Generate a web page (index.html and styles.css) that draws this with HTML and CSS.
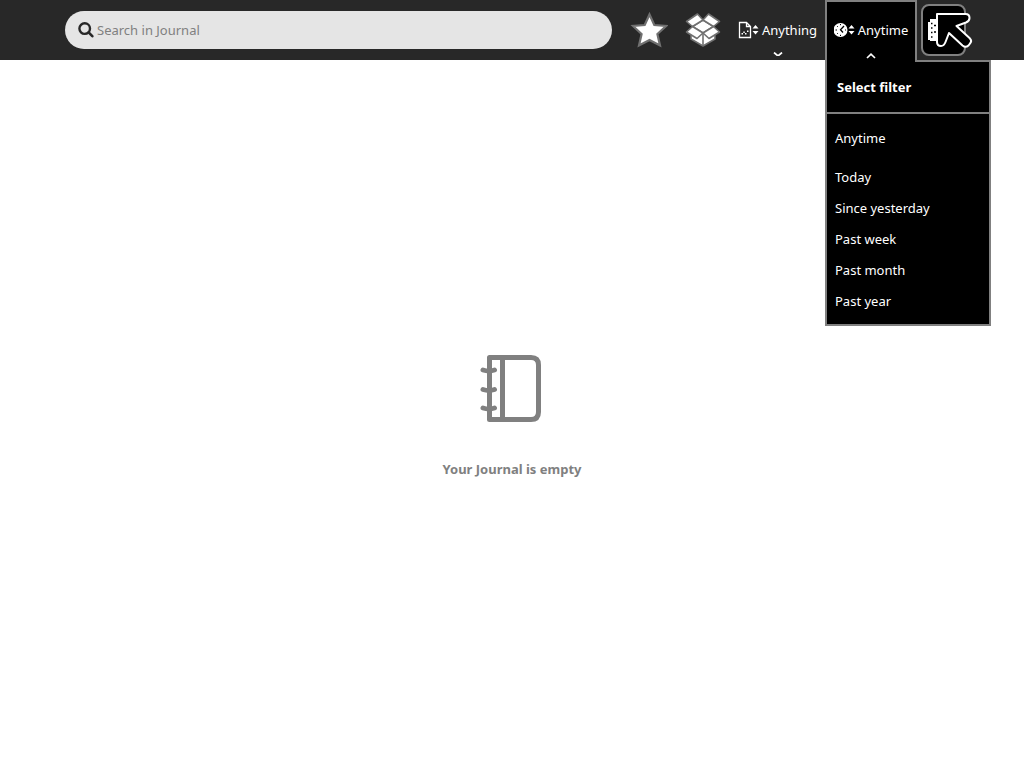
FILE: index.html
```html
<!DOCTYPE html>
<html lang="en">
<head>
<meta charset="utf-8">
<title>Journal</title>
<link rel="stylesheet" href="styles.css">
</head>
<body>
<header class="toolbar">
  <div class="search">
    <svg class="search-icon" viewBox="0 0 16 16" aria-hidden="true"><circle cx="6.7" cy="6.6" r="5.3" fill="none" stroke="#282828" stroke-width="2.4"/><path d="M10.600 10.400L14.300 14.200" stroke="#282828" stroke-width="2.600" stroke-linecap="round"/></svg>
    <input class="search-input" type="text" placeholder="Search in Journal" aria-label="Search in Journal">
  </div>
  <button class="tool" type="button" aria-label="Favorites">
    <svg class="tool-icon" viewBox="0 0 38 38" aria-hidden="true"><path d="M19.500 3.500L24.300 14L36 15L27.400 23L30 34.500L19.500 29L9 34.500L11.600 23L3 15L14.700 14Z" fill="#fff" stroke="#707070" stroke-width="2.200"/></svg>
  </button>
  <button class="tool" type="button" aria-label="Projects">
    <svg class="tool-icon" viewBox="0 0 38 38" aria-hidden="true"><g fill="#fff" stroke="#707070" stroke-width="1.600" stroke-linejoin="round"><path d="M7 20V28L19 35L31 28V20L19 14Z"/><path d="M19 23V35" fill="none"/><path d="M19 9L29.500 15.500L19 22L8.500 15.500Z"/><path d="M13.500 3L19 9L8.500 15.500L2.500 10.500Z"/><path d="M24.500 3L35.500 10.500L29.500 15.500L19 9Z"/><path d="M8.500 15.500L19 22L13 27.500L2.500 21Z"/><path d="M29.500 15.500L35.500 21L25 27.500L19 22Z"/></g></svg>
  </button>
  <button class="filter" type="button">
    <span class="filter-row">
      <svg class="filter-icon" viewBox="0 0 22 18" aria-hidden="true"><path d="M1.500 1.500H8.500L12.500 5.500V16.500H1.500ZM8.500 1.500V5.500H12.500" fill="none" stroke="#fff" stroke-width="1.300"/><path d="M3.500 12h1.500v1.500h-1.500ZM5.300 10.500h1.500v1.500h-1.500ZM7 12h1.500v1.500h-1.500ZM9 9.500h1.500v1.500h-1.500Z" fill="#fff"/><path d="M14.500 7.500L17.500 4L20.500 7.500ZM14.500 10L17.500 13.500L20.500 10Z" fill="#fff"/></svg>
      Anything
    </span>
    <svg class="chevron chevron-low" viewBox="0 0 10 4" aria-hidden="true"><path d="M1 .5L5 4L9 .5" fill="none" stroke="#fff" stroke-width="1.700"/></svg>
  </button>
  <div class="filter-group">
    <button class="filter filter-open" type="button" aria-expanded="true">
      <span class="filter-row">
        <svg class="filter-icon" viewBox="0 0 22 18" aria-hidden="true"><circle cx="6.500" cy="9" r="7" fill="#fff"/><path d="M10 5L6.500 8.800L9 11.500" fill="none" stroke="#000" stroke-width="1.300"/><path d="M1.500 9H3M6.500 3V4.200M6.500 13.800V15M3 5L3.800 5.800M3 13L3.800 12.200M11 9H12" stroke="#000"/><path d="M14.500 7.500L17.500 4L20.500 7.500ZM14.500 10L17.500 13.500L20.500 10Z" fill="#fff"/></svg>
        Anytime
      </span>
      <svg class="chevron" viewBox="0 0 10 6" aria-hidden="true"><path d="M1 5L5 1.200L9 5" fill="none" stroke="#fff" stroke-width="1.700"/></svg>
    </button>
    <section class="menu">
      <h2 class="menu-title">Select filter</h2>
      <ul class="menu-list">
        <li><button class="menu-item menu-item-first" type="button">Anytime</button></li>
        <li><button class="menu-item" type="button">Today</button></li>
        <li><button class="menu-item" type="button">Since yesterday</button></li>
        <li><button class="menu-item" type="button">Past week</button></li>
        <li><button class="menu-item" type="button">Past month</button></li>
        <li><button class="menu-item" type="button">Past year</button></li>
      </ul>
    </section>
  </div>
  <button class="sort" type="button" aria-label="Sort">
    <svg class="sort-icon" viewBox="0 0 24 24" aria-hidden="true"><path d="M0 4H2V1H16V23H2V22H0Z" fill="#fff"/><path d="M3 5.500H4.500M3 10H4.500M3 14.500H4.500M3 19H4.500M6 7.500H8M6 14H8" stroke="#000" stroke-width="1.400"/></svg>
    <svg class="pointer" viewBox="0 0 38 38" aria-hidden="true"><path d="M2 3H30.500Q34.500 3 34.500 7Q34.500 10 31 11.500L21.500 15L34.500 27Q37.500 30 35 32.500L33.500 34.500Q30.500 37 27.500 34.500L14 22L10.500 31Q9 35 6 35Q2 35 2 31Z" fill="#000" stroke="#fff" stroke-width="2" stroke-linejoin="round"/></svg>
  </button>
</header>
<main class="empty">
  <svg class="journal-icon" viewBox="0 0 64 70" aria-hidden="true"><g fill="none" stroke="#808080" stroke-width="5"><path d="M9.500 4.500H51Q58.500 4.500 58.500 12V59Q58.500 66.500 51 66.500H9.500Z" stroke-linejoin="round"/><path d="M22.500 4V67"/><path d="M3 17Q9 19 14.500 17M3 36.500Q9 38.500 14.500 36.500M3 55Q9 57 14.500 55" stroke-linecap="round"/></g></svg>
  <p class="empty-text">Your Journal is empty</p>
</main>
</body>
</html>
```
FILE: styles.css
```css
* { box-sizing: border-box; }
body {
  margin: 0;
  min-height: 100vh;
  display: flex;
  flex-direction: column;
  background: #fff;
  font: 13px/20px "Noto Sans", sans-serif;
}
button {
  margin: 0;
  padding: 0;
  border: 0;
  background: none;
  color: #fff;
  font: inherit;
}
svg { display: block; flex: none; }
.toolbar {
  display: flex;
  align-items: center;
  height: 60px;
  padding: 0 58px 0 65px;
  background: #282828;
}
.search {
  flex: 1;
  display: flex;
  align-items: center;
  gap: 3px;
  height: 38px;
  margin-right: 10px;
  padding: 0 16px 0 13px;
  border-radius: 19px;
  background: #e5e5e5;
}
.search-icon { width: 16px; height: 16px; }
.search-input {
  flex: 1;
  min-width: 0;
  padding: 0;
  border: 0;
  outline: 0;
  background: none;
  color: #000;
  font: inherit;
}
.search-input::placeholder { color: #808080; opacity: 1; }
.tool { display: grid; place-items: center; width: 54px; height: 60px; }
.tool-icon { width: 38px; height: 38px; }
.filter {
  display: flex;
  flex-direction: column;
  align-items: center;
  width: 95px;
  height: 60px;
  padding-top: 20px;
}
.filter-row { display: flex; align-items: center; gap: 2px; }
.filter-icon { width: 22px; height: 18px; }
.chevron { width: 10px; height: 6px; margin-top: 13px; }
.chevron-low { height: 4px; margin-top: 12px; }
.filter-group { position: relative; align-self: flex-start; }
.filter-open {
  position: relative;
  z-index: 2;
  width: 92px;
  height: 62px;
  padding-top: 18px;
  border: 2px solid #808080;
  border-bottom: 0;
  background: #000;
}
.menu {
  position: absolute;
  z-index: 1;
  top: 60px;
  left: 0;
  width: 166px;
  border: 2px solid #808080;
  background: #000;
  color: #fff;
}
.menu-title {
  margin: 0;
  padding: 15px 10px;
  border-bottom: 2px solid #808080;
  font-size: 13px;
  line-height: 20px;
}
.menu-list { margin: 0; padding: 8px 0; list-style: none; }
.menu-item { display: block; width: 100%; height: 31px; padding: 0 8px; text-align: left; }
.menu-item-first { margin-bottom: 8px; }
.sort {
  position: relative;
  width: 45px;
  height: 52px;
  margin-left: 4px;
  padding: 0 5px;
  border: 2px solid #808080;
  border-radius: 8px;
  background: #000;
}
.sort-icon { width: 24px; height: 24px; }
.pointer { position: absolute; z-index: 3; top: 5px; left: 12px; width: 38px; height: 38px; }
.empty {
  flex: 1;
  display: flex;
  flex-direction: column;
  align-items: center;
  justify-content: center;
  gap: 36px;
  padding-top: 4px;
}
.journal-icon { width: 64px; height: 70px; }
.empty-text { margin: 0; color: #808080; font-weight: 700; }
```
